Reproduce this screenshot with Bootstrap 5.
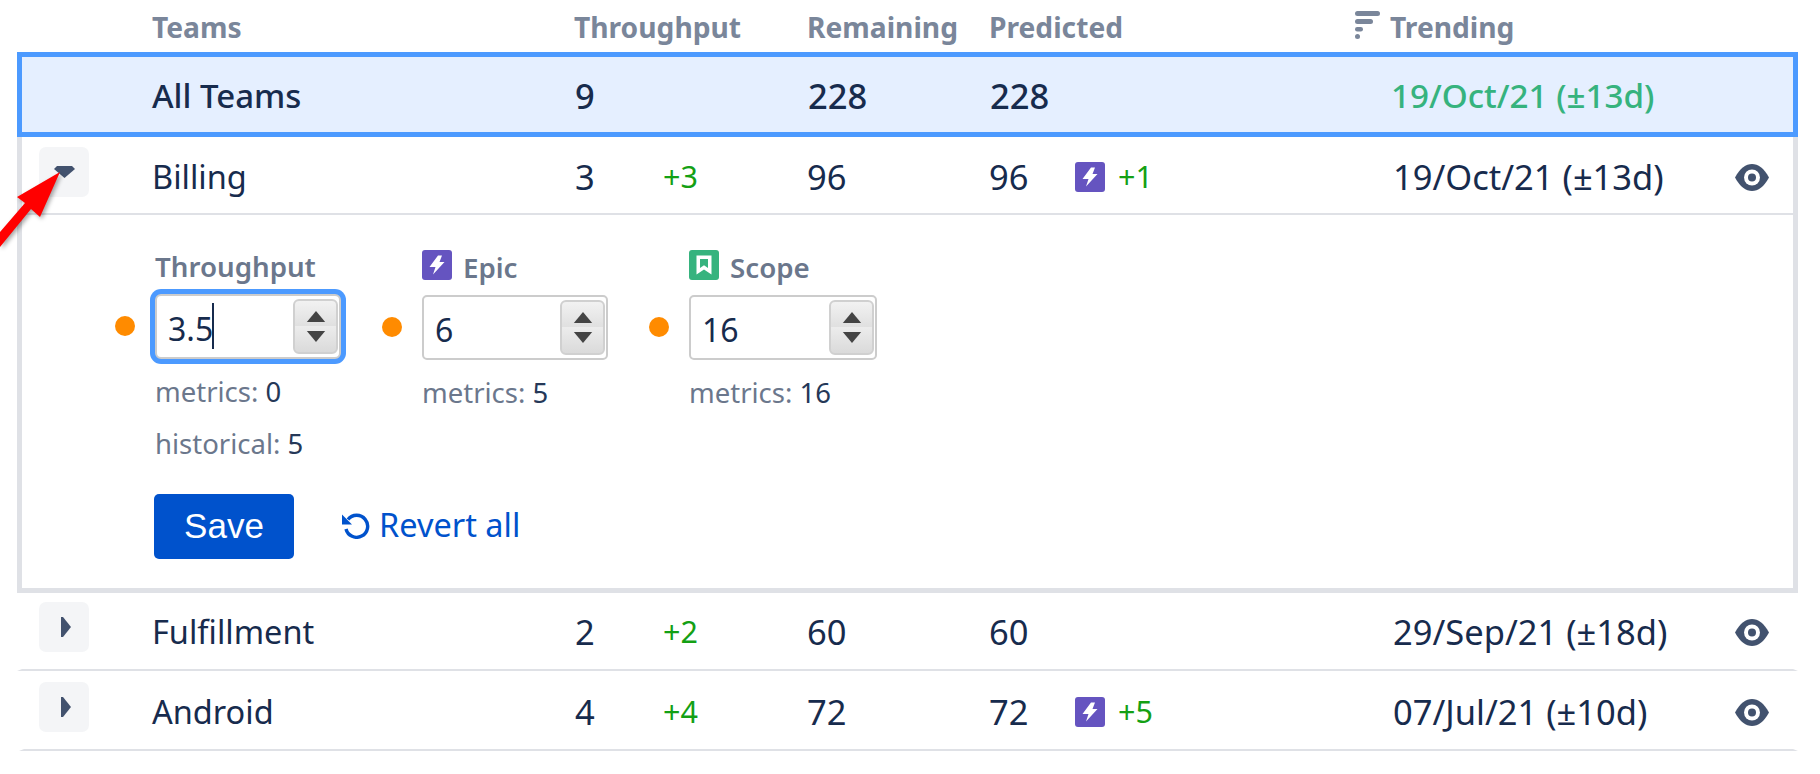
<!DOCTYPE html>
<html lang="en">
<head>
<meta charset="utf-8">
<title>Teams</title>
<link href="https://cdn.jsdelivr.net/npm/bootstrap@5.3.0/dist/css/bootstrap.min.css" rel="stylesheet">
<style>
body{font-family:"Noto Sans","Open Sans",sans-serif;color:#172b4d;background:#fff;font-size:32.5px;overflow:hidden}
.sheet{position:relative;width:1820px;height:774px}
.tbl{margin-left:17px;width:1781px}
.tr{display:grid;grid-template-columns:130px 422px 233px 182px 401px 345px 1fr;align-items:center;border-left:5px solid transparent;border-right:5px solid transparent;white-space:nowrap}
.thead{height:52px;color:#7a869a;font-weight:700;font-size:28.2px;padding-top:3px}
.total{height:85px;background:#e5efff;border:5px solid #4c9aff;font-weight:500;padding-top:2px;font-size:33px}
.total .datecell{color:#36b37e;padding-left:1px;font-size:33.2px}
.total .numval{padding-left:1px;font-size:34.5px}
.team{height:78px;border-bottom:2px solid #dfe1e6;padding-top:4px}
.team.first{border-left-color:#dfe1e6;border-right-color:#dfe1e6}
.team.mid{padding-top:2px}
.team.last{height:80px;margin-left:2px;grid-template-columns:128px 422px 233px 182px 401px 345px 1fr}
.xbtn{width:50px;height:50px;margin-left:17px;background:#f4f5f7;border:0;border-radius:7px;padding:0;display:flex;align-items:center;justify-content:center}
.xbtn svg.rt{margin-left:3px}
.team.first .xbtn{margin-top:-10px}
.team.mid .xbtn{margin-top:-11px}
.team.last .xbtn{margin-left:15px;margin-top:-11px}
.delta{color:#14a014;font-size:30.5px}
.numval,.datecell{font-size:34.5px}
.numcell,.predcell{display:flex;align-items:center}
.numcell>.numval{width:89px;padding-left:1px}
.predcell>.numval{width:86px}
.predcell svg{margin-right:13px}
.datecell{padding-left:3px}
.sorted{position:relative}
.sorticon{position:absolute;left:-35px;top:5px}
.editor{border:5px solid #dfe1e6;border-top:0;padding:35px 0 30px 92px;height:378px}
.fld{width:267px;padding-left:41px;position:relative}
.fld.focus{margin-top:-1px}
.fldlabel{height:30px;color:#6b778c;font-weight:600;font-size:27.700px;display:flex;align-items:center;gap:11px;margin-bottom:15px;line-height:30px;padding-top:4px}
.fldlabel svg{margin-top:-4px}
.boxwrap{position:relative;width:186px;height:65px}
.boxwrap.wide{width:188px}
.boxwrap .form-control{width:100%;height:65px;border:2px solid #ccc;border-radius:5px;padding:4px 10px 0 11px;font-size:32px;color:#172b4d;background:#fff;box-shadow:none}
.focus .boxwrap .form-control{border-radius:6px;padding-left:11px;box-shadow:0 0 0 5px #4c9aff;border-color:#ccc}
.spinner{position:absolute;right:3px;top:5px;width:45px;height:55px;border:2px solid #d0d0d0;border-radius:6px;background:linear-gradient(#f2f2f2,#e0e0e0 48%,#ececec 50%,#dadada);display:flex;flex-direction:column;align-items:center;justify-content:space-around;padding:6px 0}
.caretbar{position:absolute;left:57px;top:9px;width:2px;height:46px;background:#172b4d}
.dot{position:absolute;left:1px;top:67px;width:20px;height:20px;border-radius:50%;background:#ff8b00}
.meta{font-size:27.500px;line-height:52px;color:#6b778c;white-space:nowrap}
.meta b{font-weight:400;color:#253858}
.metawrap{margin-top:7px}
.actions{margin-top:24px;margin-left:40px;gap:47px}
.savebtn{width:140px;height:65px;background:#0052cc;border:0;border-radius:5px;color:#fff;font-family:"Liberation Sans",Arial,sans-serif;font-size:35px;padding:0}
.revert{color:#0052cc;text-decoration:none;font-size:32.500px;display:flex;align-items:center;gap:9px;margin-top:-2px}
.ptr{position:absolute;left:0;top:165px;filter:drop-shadow(2px 2px 2px rgba(0,0,0,.35))}
</style>
</head>
<body>
<svg width="0" height="0" class="d-none" aria-hidden="true">
  <symbol id="ic-epic" viewBox="0 0 30 30"><rect width="30" height="30" rx="3" fill="#6554c0"/><path d="M16 5.500h4l-2.500 6.500h5L11 24.500 13.500 17H7.500z" fill="#fff"/></symbol>
  <symbol id="ic-scope" viewBox="0 0 30 30"><rect width="30" height="30" rx="3" fill="#36b37e"/><path d="M7.500 5.500h15v19L15 19.500l-7.500 5z" fill="#fff"/><path d="M11 9h8v9l-4-2.700L11 18z" fill="#36b37e"/></symbol>
  <symbol id="ic-eye" viewBox="0 0 34 27"><path d="M0 13.500C5 4 11 0 17 0s12 4 17 13.500C29 23 23 27 17 27S5 23 0 13.500z" fill="#42526e"/><circle cx="17" cy="13.500" r="8" fill="#fff"/><circle cx="17" cy="13.500" r="4" fill="#42526e"/></symbol>
  <symbol id="ic-right" viewBox="0 0 12 20"><path d="M1 0h2l8 10-8 10H1z" fill="#42526e"/></symbol>
  <symbol id="ic-up" viewBox="0 0 20 12"><path d="M10 0 20 12H0z" fill="#444"/></symbol>
  <symbol id="ic-down" viewBox="0 0 20 12"><path d="M0 0h20L10 12z" fill="#444"/></symbol>
</svg>
<div class="sheet">
  <div class="tbl">
    <div class="tr thead">
      <div></div><div>Teams</div><div>Throughput</div><div>Remaining</div><div>Predicted</div>
      <div class="sorted">
        <svg class="sorticon" width="26" height="29" viewBox="0 0 26 29" fill="#7a869a"><rect x="0" y="0" width="25" height="5" rx="2.500"/><rect x="0" y="8" width="18" height="5" rx="2.500"/><rect x="0" y="16" width="8" height="4.500" rx="2.200"/><rect x="0" y="23" width="5" height="5" rx="2.500"/></svg>
        <span>Trending</span>
      </div>
      <div></div>
    </div>

    <div class="tr total">
      <div></div><div>All Teams</div><div class="numval">9</div><div class="numval">228</div><div class="numval">228</div>
      <div class="datecell">19/Oct/21 (±13d)</div><div></div>
    </div>

    <div class="tr team first">
      <div><button class="xbtn" type="button" aria-label="Collapse"><svg width="21" height="12" viewBox="0 0 21 12"><path d="M3 0h15l3 3-10.500 9L0 3z" fill="#42526e"/></svg></button></div>
      <div>Billing</div>
      <div class="numcell"><span class="numval">3</span><span class="delta">+3</span></div>
      <div class="numval">96</div>
      <div class="predcell"><span class="numval">96</span><svg width="30" height="30"><use href="#ic-epic"/></svg><span class="delta">+1</span></div>
      <div class="datecell">19/Oct/21 (±13d)</div>
      <div class="d-flex"><svg width="34" height="27"><use href="#ic-eye"/></svg></div>
    </div>

    <div class="editor">
      <div class="d-flex">
        <div class="fld focus">
          <span class="dot"></span>
          <div class="fldlabel">Throughput</div>
          <div class="boxwrap">
            <input class="form-control" type="text" value="3.5" aria-label="Throughput">
            <span class="caretbar"></span>
            <div class="spinner"><svg width="20" height="11"><use href="#ic-up"/></svg><svg width="20" height="11"><use href="#ic-down"/></svg></div>
          </div>
          <div class="metawrap">
            <div class="meta">metrics: <b>0</b></div>
            <div class="meta">historical: <b>5</b></div>
          </div>
        </div>
        <div class="fld">
          <span class="dot"></span>
          <div class="fldlabel"><svg width="30" height="30"><use href="#ic-epic"/></svg>Epic</div>
          <div class="boxwrap">
            <input class="form-control" type="text" value="6" aria-label="Epic">
            <div class="spinner"><svg width="20" height="11"><use href="#ic-up"/></svg><svg width="20" height="11"><use href="#ic-down"/></svg></div>
          </div>
          <div class="metawrap"><div class="meta">metrics: <b>5</b></div></div>
        </div>
        <div class="fld">
          <span class="dot"></span>
          <div class="fldlabel"><svg width="30" height="30"><use href="#ic-scope"/></svg>Scope</div>
          <div class="boxwrap wide">
            <input class="form-control" type="text" value="16" aria-label="Scope">
            <div class="spinner"><svg width="20" height="11"><use href="#ic-up"/></svg><svg width="20" height="11"><use href="#ic-down"/></svg></div>
          </div>
          <div class="metawrap"><div class="meta">metrics: <b>16</b></div></div>
        </div>
      </div>
      <div class="d-flex align-items-center actions">
        <button class="btn savebtn" type="button">Save</button>
        <a class="revert" href="#"><svg width="29" height="27" viewBox="0 0 29 27" fill="none"><path d="M7 7.500A11 11 0 1 1 5 17" stroke="#0052cc" stroke-width="3.400"/><path d="M1 2.500v10h10z" fill="#0052cc"/></svg>Revert all</a>
      </div>
    </div>

    <div class="tr team mid">
      <div><button class="xbtn" type="button" aria-label="Expand"><svg class="rt" width="12" height="20"><use href="#ic-right"/></svg></button></div>
      <div>Fulfillment</div>
      <div class="numcell"><span class="numval">2</span><span class="delta">+2</span></div>
      <div class="numval">60</div>
      <div class="predcell"><span class="numval">60</span></div>
      <div class="datecell">29/Sep/21 (±18d)</div>
      <div class="d-flex"><svg width="34" height="27"><use href="#ic-eye"/></svg></div>
    </div>

    <div class="tr team last">
      <div><button class="xbtn" type="button" aria-label="Expand"><svg class="rt" width="12" height="20"><use href="#ic-right"/></svg></button></div>
      <div>Android</div>
      <div class="numcell"><span class="numval">4</span><span class="delta">+4</span></div>
      <div class="numval">72</div>
      <div class="predcell"><span class="numval">72</span><svg width="30" height="30"><use href="#ic-epic"/></svg><span class="delta">+5</span></div>
      <div class="datecell">07/Jul/21 (±10d)</div>
      <div class="d-flex"><svg width="34" height="27"><use href="#ic-eye"/></svg></div>
    </div>
  </div>

  <svg class="ptr" width="62" height="90" viewBox="0 165 62 90" aria-hidden="true"><path d="M60 172 40 217 31 209 0 247V232L25 203 17 197z" fill="#f00"/></svg>
</div>
<script src="https://cdn.jsdelivr.net/npm/bootstrap@5.3.0/dist/js/bootstrap.bundle.min.js"></script>
</body>
</html>
